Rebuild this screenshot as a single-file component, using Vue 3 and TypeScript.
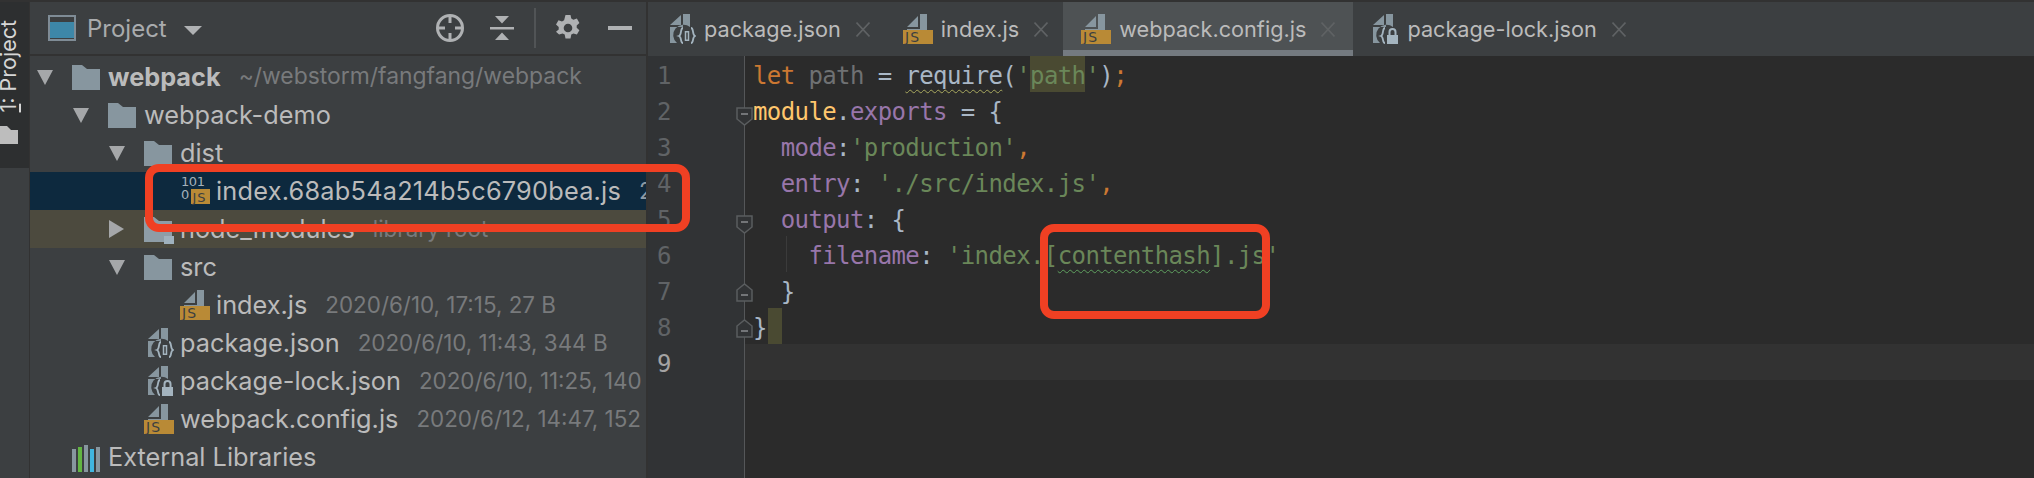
<script setup lang="ts">
type Row = { level: number; arrow?: 'down' | 'right'; icon: string; name: string; meta?: string; cls?: string; bold?: boolean; iconCls?: string }
const rows: Row[] = [
  { level: 0, arrow: 'down', icon: 'i-folder', name: 'webpack', meta: '~/webstorm/fangfang/webpack', bold: true },
  { level: 1, arrow: 'down', icon: 'i-folder', name: 'webpack-demo' },
  { level: 2, arrow: 'down', icon: 'i-folder', name: 'dist' },
  { level: 3, icon: 'i-bin', name: 'index.68ab54a214b5c6790bea.js', meta: '2020/6/12, 14:47, 1.2 kB', cls: 'selected' },
  { level: 2, arrow: 'right', icon: 'i-folder-x', name: 'node_modules', meta: 'library root', cls: 'excluded' },
  { level: 2, arrow: 'down', icon: 'i-folder', name: 'src' },
  { level: 3, icon: 'i-js', name: 'index.js', meta: '2020/6/10, 17:15, 27 B' },
  { level: 2, icon: 'i-json', name: 'package.json', meta: '2020/6/10, 11:43, 344 B' },
  { level: 2, icon: 'i-lock', name: 'package-lock.json', meta: '2020/6/10, 11:25, 140 KB' },
  { level: 2, icon: 'i-js', name: 'webpack.config.js', meta: '2020/6/12, 14:47, 152 B' },
  { level: 0, icon: 'i-libs', name: 'External Libraries' },
]
const tabs = [
  { icon: 'i-json', name: 'package.json', narrow: true },
  { icon: 'i-js', name: 'index.js' },
  { icon: 'i-js', name: 'webpack.config.js', active: true },
  { icon: 'i-lock', name: 'package-lock.json', narrow: true },
]
type Tok = [string, string]
const lines: { toks: Tok[]; fold?: string; guide?: boolean; current?: boolean; mark?: boolean }[] = [
  { toks: [['let', 'kw'], [' ', ''], ['path', 'unused'], [' = ', 'op'], ['require', 'op wavy-y'], ['(', 'op'], ["'", 'str'], ['path', 'str hit'], ["'", 'str'], [')', 'op'], [';', 'kw']] },
  { fold: 'down', toks: [['module', 'fn'], ['.', 'op'], ['exports', 'prop'], [' = {', 'op']] },
  { toks: [['  ', ''], ['mode', 'prop'], [':', 'op'], ["'production'", 'str'], [',', 'kw']] },
  { toks: [['  ', ''], ['entry', 'prop'], [': ', 'op'], ["'./src/index.js'", 'str'], [',', 'kw']] },
  { fold: 'down', toks: [['  ', ''], ['output', 'prop'], [': {', 'op']] },
  { guide: true, toks: [['    ', ''], ['filename', 'prop'], [': ', 'op'], ["'index.[", 'str'], ['contenthash', 'str wavy-g'], ["].js'", 'str']] },
  { fold: 'up', toks: [['  ', ''], ['}', 'op']] },
  { fold: 'up', mark: true, toks: [['}', 'op']] },
  { current: true, toks: [] },
]
</script>

<template>
  <div class="ide">
    <svg class="defs" width="0" height="0" aria-hidden="true">
      <defs>
        <symbol id="i-folder" viewBox="0 0 30 30">
          <path d="M0 3h10l5 4h13v21H0z" fill="#87969f" />
        </symbol>
        <symbol id="i-folder-x" viewBox="0 0 30 30">
          <path d="M0 3h10l5 4h13v21H0z" fill="#8e9da7" />
          <rect x="20" y="22" width="10" height="8" fill="#9fb1bd" />
        </symbol>
        <symbol id="i-js" viewBox="0 0 30 30">
          <path d="M4 13 15 2v11zM17 0h7v16H4v-1h13z" fill="#87969f" />
          <rect y="16" width="30" height="14" fill="#b98a36" />
          <text x="2" y="28" font-size="14" letter-spacing="1" font-family="'DejaVu Sans',sans-serif" fill="#3c3f41">JS</text>
        </symbol>
        <symbol id="i-bin" viewBox="0 0 30 30">
          <text x="1" y="10" font-size="13" font-family="'DejaVu Sans',sans-serif" fill="#a3b0ba" textLength="24">101</text>
          <text x="1" y="23" font-size="13" font-family="'DejaVu Sans',sans-serif" fill="#a3b0ba">0</text>
          <rect x="11" y="13" width="19" height="15" fill="#b98a36" />
          <text x="12.5" y="26" font-size="13" letter-spacing="1" font-family="'DejaVu Sans',sans-serif" fill="#3c3f41">JS</text>
        </symbol>
        <symbol id="i-json" viewBox="0 0 30 30">
          <g transform="translate(4 0)">
            <path d="M0 11 11 1v10zM13 0h7v13a9 9 0 0 0-13 16H0V13h13z" fill="#87969f" />
            <path d="M13 14c-3 0-1 7-4 8 3 1 1 7 4 7M21 14c3 0 1 7 4 8-3 1-1 7-4 7" fill="none" stroke="#a4b4bf" stroke-width="1.8" />
            <path d="M17 17v10" stroke="#a4b4bf" stroke-width="4.500" />
            <path d="M17 18.500v7" stroke="#3c3f41" stroke-width="1.500" />
          </g>
        </symbol>
        <symbol id="i-lock" viewBox="0 0 30 30">
          <g transform="translate(4 0)">
            <path d="M0 11 11 1v10zM13 0h7v13a9 9 0 0 0-13 16H0V13h13z" fill="#87969f" />
            <path d="M12 14c-3 0-1 7-4 8 3 1 1 7 4 7" fill="none" stroke="#a4b4bf" stroke-width="1.8" />
            <rect x="14" y="21" width="11" height="9" fill="#a4b4bf" />
            <path d="M16.500 22v-4a3 3 0 0 1 6 0v4" fill="none" stroke="#a4b4bf" stroke-width="2" />
          </g>
        </symbol>
        <symbol id="i-libs" viewBox="0 0 30 30">
          <rect x="0" y="7" width="4" height="23" fill="#87969f" />
          <rect x="6" y="5" width="4" height="25" fill="#62b543" />
          <rect x="12" y="3" width="4" height="27" fill="#87969f" />
          <rect x="18" y="7" width="4" height="23" fill="#40b6e0" />
          <rect x="24" y="5" width="4" height="25" fill="#87969f" />
        </symbol>
      </defs>
    </svg>

    <div class="topline"></div>
    <div class="main">
      <aside class="strip">
        <div class="strip-active">
          <span class="strip-label"><u>1</u>: Project</span>
          <svg class="strip-folder" width="21" height="18" viewBox="0 0 21 18"><path d="M0 0h9l4 4h7v14H0z" fill="#bdbdbd" /></svg>
        </div>
      </aside>

      <section class="panel">
        <header class="panel-head">
          <svg class="proj-ic" width="28" height="26" viewBox="0 0 28 26">
            <rect width="28" height="26" fill="#7f8c96" />
            <rect x="2" y="2" width="24" height="22" fill="#3c3f41" />
            <rect x="2" y="7" width="24" height="16" fill="#3d87a8" />
          </svg>
          <span class="proj-title">Project</span>
          <i class="proj-caret"></i>
          <span class="spring"></span>
          <svg class="tool t-target" width="28" height="28" viewBox="0 0 28 28" fill="none" stroke="#afb1b3" stroke-width="3">
            <circle cx="14" cy="14" r="12.5" />
            <path d="M14 2v7M14 19v7M2 14h7M19 14h7" />
          </svg>
          <svg class="tool t-collapse" width="24" height="24" viewBox="0 0 24 24" fill="#afb1b3">
            <path d="M0 11h24v2.5H0zM5 0h14l-7 7.5zM5 24h14l-7-7.5z" />
          </svg>
          <i class="tool-sep"></i>
          <svg class="tool t-gear" width="24" height="26" viewBox="0 0 24 26" fill="#afb1b3">
            <path fill-rule="evenodd" d="M9.5 0h5l.8 3.6 2.1 1.2 3.5-1.2 2.5 4.4-2.7 2.4v2.4l2.7 2.4-2.5 4.4-3.5-1.2-2.1 1.2-.8 3.9h-5l-.8-3.9-2.1-1.2-3.5 1.2L0 16.800l2.700-2.400V12L0 9.600 2.500 5.200 6 6.400 8.100 5.200zM12 8.700a4.300 4.300 0 1 0 0 8.600 4.300 4.300 0 0 0 0-8.600z" />
          </svg>
          <i class="t-min"></i>
        </header>
        <div class="tree">
          <div v-for="r in rows" :key="r.name" class="row" :class="r.cls" :style="{ paddingLeft: 7 + r.level * 36 + 'px' }">
            <span class="arrow-col">
              <i v-if="r.arrow === 'down'" class="arrow-down"></i>
              <i v-else-if="r.arrow === 'right'" class="arrow-right"></i>
            </span>
            <svg class="icon"><use :href="'#' + r.icon" /></svg>
            <span class="name" :class="{ bold: r.bold }">{{ r.name }}</span>
            <span v-if="r.meta" class="meta">{{ r.meta }}</span>
          </div>
        </div>
      </section>

      <section class="editor">
        <nav class="tabs">
          <div v-for="t in tabs" :key="t.name" class="tab" :class="{ active: t.active }">
            <svg class="tab-ic" :class="{ narrow: t.narrow }" viewBox="0 0 30 30"><use :href="'#' + t.icon" width="30" height="30" /></svg>
            <span class="tab-name">{{ t.name }}</span>
            <svg class="tab-x" width="14" height="15" viewBox="0 0 14 15" stroke="#5f6264" stroke-width="1.6" fill="none"><path d="M0.500 0.500 13.500 14.500M13.500 0.500 0.500 14.500" /></svg>
          </div>
        </nav>
        <div class="code">
          <div v-for="(l, i) in lines" :key="i" class="line" :class="{ current: l.current }">
            <div class="gutter">
              <span class="num">{{ i + 1 }}</span>
              <svg v-if="l.fold" class="fold" :class="l.fold" width="17" height="19" viewBox="0 0 17 19" fill="#313335" stroke="#5a5d5f" stroke-width="1.500">
                <path v-if="l.fold === 'down'" d="M1 1h15v11l-7.500 6L1 12z" />
                <path v-else d="M1 18h15V7L8.500 1 1 7z" />
                <path :d="l.fold === 'down' ? 'M5 7h7' : 'M5 12h7'" stroke="#8a8d8f" />
              </svg>
            </div>
            <div class="src">
              <i v-if="l.guide" class="guide"></i>
              <span v-for="(t, j) in l.toks" :key="j" :class="t[1]">{{ t[0] }}</span>
              <i v-if="l.mark" class="mark"></i>
            </div>
          </div>
          <div class="rest"><div class="gutter"></div></div>
        </div>
      </section>
    </div>

    <div class="callout c1"></div>
    <div class="callout c2"></div>
  </div>
</template>

<style scoped>
.ide {
  position: relative;
  width: 2034px;
  height: 478px;
  overflow: hidden;
  display: flex;
  flex-direction: column;
  background: #2b2b2b;
  font-family: Inter, "Liberation Sans", sans-serif;
}
.defs { position: absolute; }
.topline { height: 2px; background: #323232; flex: none; }
.main { flex: 1; display: flex; min-height: 0; }

.strip { width: 29px; flex: none; background: #3c3f41; border-right: 1px solid #323232; }
.strip-active {
  height: 166px;
  background: #2d2f30;
  display: flex;
  flex-direction: column;
  overflow: hidden;
  padding-top: 18px;
  box-sizing: border-box;
}
.strip-label {
  writing-mode: vertical-rl;
  transform: rotate(180deg);
  font-size: 21.500px;
  line-height: 22px;
  width: 22px;
  color: #d6d6d6;
  white-space: nowrap;
  margin-left: -3px;
}
.strip-folder { margin-top: 14px; margin-left: -2px; flex: none; }

.panel { width: 616px; flex: none; border-right: 2px solid #323232; background: #3c3f41; display: flex; flex-direction: column; overflow: hidden; }
.panel-head {
  height: 52px;
  flex: none;
  border-bottom: 2px solid #323232;
  display: flex;
  align-items: center;
  padding-left: 18px;
  color: #a9a9a9;
}
.proj-ic { flex: none; }
.proj-title { margin-left: 11px; font-size: 24px; color: #a9abad; }
.proj-caret { margin-left: 17px; margin-top: 4px; border-left: 9px solid transparent; border-right: 9px solid transparent; border-top: 9px solid #afb1b3; }
.spring { flex: 1; }
.tool { flex: none; }
.t-collapse { margin-left: 26px; }
.tool-sep { width: 2px; height: 40px; background: #515456; margin: 0 20px 0 20px; }
.t-min { width: 24px; height: 4px; background: #afb1b3; margin: 0 14px 0 28px; }

.tree { padding-top: 2px; }
.row {
  height: 38px;
  display: flex;
  align-items: center;
  white-space: nowrap;
  font-size: 25.300px;
  color: #bbbbbb;
  box-sizing: border-box;
}
.row.selected { background: #0d293e; }
.row.selected .name { letter-spacing: 0.23px; }
.row.excluded { background: #4c4a3e; }
.arrow-col { width: 35px; flex: none; display: flex; align-items: center; }
.arrow-down { border-left: 8.500px solid transparent; border-right: 8.500px solid transparent; border-top: 15px solid #a5a7a9; }
.arrow-right { border-top: 9px solid transparent; border-bottom: 9px solid transparent; border-left: 15px solid #a5a7a9; }
.icon { width: 30px; height: 30px; flex: none; margin-right: 6px; }
.name { margin-bottom: 2px; }
.name.bold { font-weight: 700; }
.meta { margin-left: 18px; margin-bottom: 2px; color: #787a7c; font-size: 22.400px; }
.row:first-child .meta { font-size: 22.900px; }
.selected .meta { color: #8d9aa5; }

.editor { flex: 1; min-width: 0; display: flex; flex-direction: column; }
.tabs { height: 54px; flex: none; background: #3c3f41; display: flex; padding-left: 4px; box-sizing: border-box; }
.tab {
  display: flex;
  align-items: center;
  padding: 0 15px 0 18px;
  box-sizing: border-box;
  height: 54px;
  color: #bbbbbb;
}
.tab.active { background: #4e5254; border-bottom: 6px solid #747a80; padding: 6px 18px 0 18px; margin-right: 2px; }
.tab-ic { width: 30px; height: 30px; flex: none; margin-right: 8px; }
.tab-ic.narrow { margin-left: -4px; }
.tab-name { font-size: 21.700px; white-space: nowrap; }
.tab-x { margin-left: 15px; flex: none; }

.code {
  flex: 1;
  display: flex;
  flex-direction: column;
  font-family: "DejaVu Sans Mono", "Liberation Mono", monospace;
  font-size: 24px;
  letter-spacing: -0.6px;
}
.line { display: flex; height: 36px; line-height: 41px; }
.rest { flex: 1; display: flex; }
.gutter {
  position: relative;
  flex: none;
  background: #313335;
  border-right: 1px solid #555759;
  color: #606366;
  padding-left: 9px;
  box-sizing: content-box;
  width: 87px;
}
.current .gutter { color: #a4a3a3; }
.fold { position: absolute; left: 88px; top: 15px; z-index: 1; }
.fold.up { top: 11px; }
.src { position: relative; flex: 1; padding-left: 8px; white-space: pre; color: #a9b7c6; display: flex; }
.current .src { background: #323232; }
.guide { position: absolute; left: 41px; top: 0; bottom: 0; width: 1px; background: #3b3b3b; }
.mark { display: block; width: 14px; height: 36px; background: #4a4a32; margin-left: 1px; }
.kw { color: #cc7832; }
.unused { color: #6f7173; }
.op { color: #a9b7c6; }
.str { color: #6a8759; }
.fn { color: #ffc66d; }
.prop { color: #9876aa; }
.hit { background: #4a4a32; }
.wavy-y { text-decoration: underline wavy #a9a95f; text-decoration-thickness: 1px; text-underline-offset: 5px; }
.wavy-g { text-decoration: underline wavy #5fa05f; text-decoration-thickness: 1px; text-underline-offset: 5px; }

.callout {
  position: absolute;
  border: 8px solid #f04023;
  box-sizing: border-box;
  border-radius: 14px;
  pointer-events: none;
}
.c1 { left: 145px; top: 164px; width: 545px; height: 68px; }
.c2 { left: 1040px; top: 224px; width: 230px; height: 95px; }
</style>
